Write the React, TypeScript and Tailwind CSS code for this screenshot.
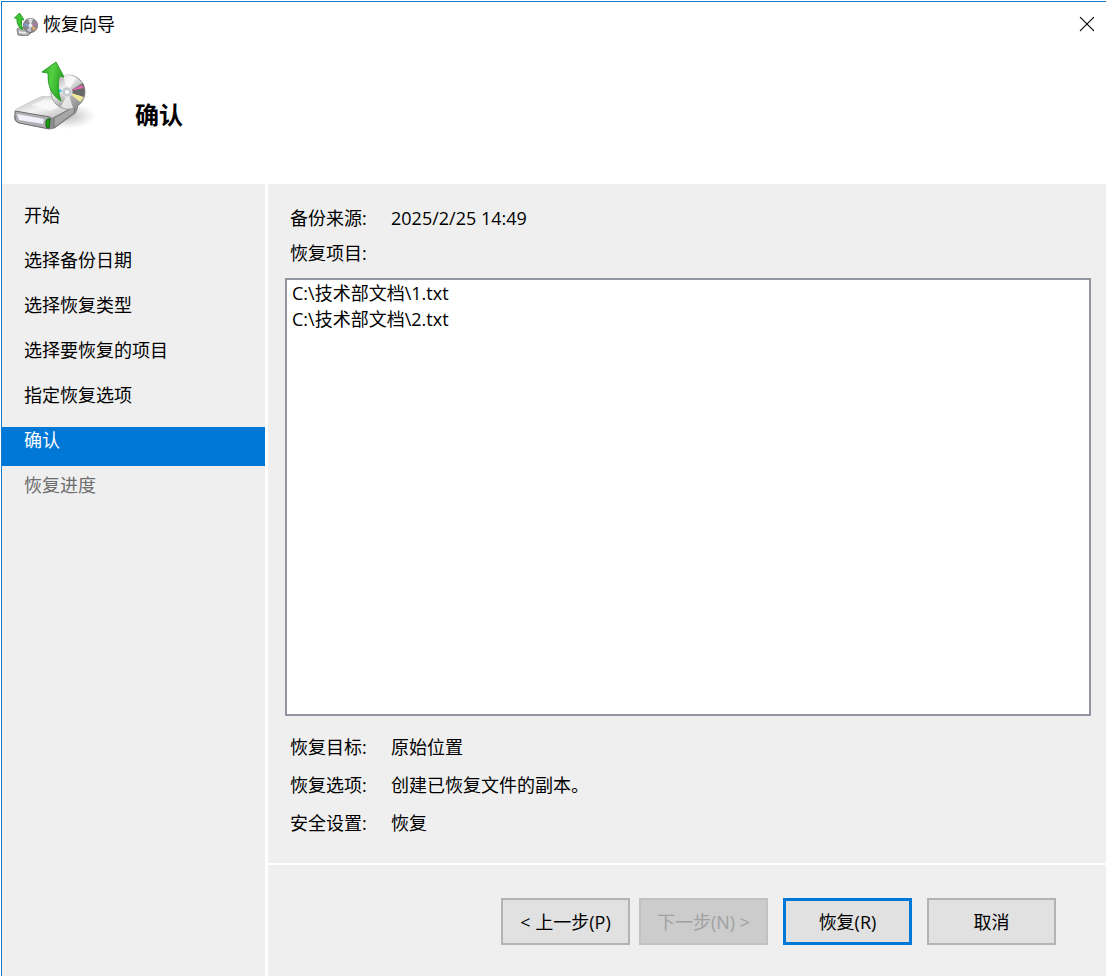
import { X } from 'lucide-react';
import { clsx } from 'clsx';

interface WizardStep {
  label: string;
  state: 'done' | 'current' | 'pending';
}

interface DetailRow {
  label: string;
  value: string;
}

const STEPS: WizardStep[] = [
  { label: '开始', state: 'done' },
  { label: '选择备份日期', state: 'done' },
  { label: '选择恢复类型', state: 'done' },
  { label: '选择要恢复的项目', state: 'done' },
  { label: '指定恢复选项', state: 'done' },
  { label: '确认', state: 'current' },
  { label: '恢复进度', state: 'pending' }
];

const DETAILS: DetailRow[] = [
  { label: '恢复目标:', value: '原始位置' },
  { label: '恢复选项:', value: '创建已恢复文件的副本。' },
  { label: '安全设置:', value: '恢复' }
];

const ITEMS = ['C:\\技术部文档\\1.txt', 'C:\\技术部文档\\2.txt'];

const BUTTON = 'h-[47px] w-[129px] border-2 border-[#b3b3b3] bg-[#e1e1e1]';

function RecoveryIcon({ className }: { className?: string }) {
  return (
    <svg viewBox="0 0 84 74" className={className} aria-hidden="true">
      <defs>
        <linearGradient id="arrow" x1="0" y1="0" x2="1" y2="0.3">
          <stop offset="0" stopColor="#2fa52a" />
          <stop offset="0.5" stopColor="#55d043" />
          <stop offset="1" stopColor="#27a322" />
        </linearGradient>
        <linearGradient id="driveTop" x1="0" y1="0" x2="1" y2="1">
          <stop offset="0" stopColor="#b8b8b8" />
          <stop offset="0.5" stopColor="#f3f3f3" />
          <stop offset="1" stopColor="#b0b0b0" />
        </linearGradient>
        <linearGradient id="disc" x1="0.1" y1="0" x2="0.9" y2="1">
          <stop offset="0" stopColor="#9a9a9a" />
          <stop offset="0.35" stopColor="#eeeeee" />
          <stop offset="0.6" stopColor="#b4b4b4" />
          <stop offset="1" stopColor="#858585" />
        </linearGradient>
        <radialGradient id="shadow">
          <stop offset="0" stopColor="#777" stopOpacity="0.5" />
          <stop offset="1" stopColor="#999" stopOpacity="0" />
        </radialGradient>
      </defs>
      <ellipse cx="55" cy="56" rx="28" ry="13" fill="url(#shadow)" />
      {/* drive */}
      <path d="M3 49 L27 37 Q30 36 34 36 L61 41 Q66 43 65 48 L63 53 L42 68 Q39 70 35 69 L6 63 Q2 62 1 58 Z" fill="#8c8c8c" />
      <path d="M3 49 L27 37 Q30 36 34 36 L61 41 Q66 43 62 46 L41 57 Q39 58 36 57 L6 53 Q1 52 3 49Z" fill="url(#driveTop)" />
      <path d="M18 45 L32 39 L54 43 L38 51Z" fill="#fff" opacity="0.6" />
      <path d="M2 51 L37 57 L36 69 L6 63 Q2 62 2 58Z" fill="#aeaeb2" stroke="#6e6e6e" strokeWidth="1" />
      <path d="M4 54 L31 59 L30 64 L6 60Z" fill="#f1f1fb" />
      <path d="M41 58 L62 46 L61 53 L41 68Z" fill="#a6a6a6" stroke="#757575" strokeWidth="1" />
      <path d="M33 61 Q34 58 37 59 L36 68 L33 67Z" fill="#18a50c" stroke="#176212" strokeWidth="1" />
      {/* disc */}
      <ellipse cx="55" cy="32" rx="17" ry="17" fill="url(#disc)" stroke="#989898" strokeWidth="1" />
      <path d="M55 32 L50 15 Q58 13 63 18Z" fill="#fff" opacity="0.7" />
      <path d="M55 32 L70 23 Q73 30 71 38Z" fill="#686868" />
      <path d="M56 31 L69 25 L71 28Z" fill="#e06ab0" />
      <path d="M55 32 L71 37 L67 42Z" fill="#eee89a" />
      <path d="M55 32 L48 47 Q54 50 60 48Z" fill="#fff" opacity="0.7" />
      <path d="M52 32 L43 27 L42 32Z" fill="#3ecde0" />
      <circle cx="54" cy="32" r="5" fill="#c6cacd" stroke="#e5e5e5" strokeWidth="1" />
      <circle cx="54" cy="32" r="2" fill="#fff" />
      {/* arrow */}
      <path
        d="M43 2 L29 12 L35 13 Q34 33 48 41 Q44 30 46 16 L51 17Z"
        fill="url(#arrow)"
        stroke="#2a9d25"
        strokeWidth="1"
        strokeLinejoin="round"
      />
    </svg>
  );
}

function TitleIcon() {
  return (
    <svg viewBox="0 0 24 24" className="size-6" aria-hidden="true">
      <path d="M3 17 L7 15 L16 18 L17 21 L13 24 L4 23Z" fill="#b5b5b8" stroke="#7b7b7b" strokeWidth="1" />
      <path d="M5 20 L12 21" stroke="#f0f0f5" strokeWidth="1.5" />
      <circle cx="16.5" cy="13.5" r="7" fill="#8b8b90" stroke="#707074" strokeWidth="1" />
      <path d="M16.5 13.5 L14 7 Q17 6 19 7Z" fill="#dedede" />
      <path d="M16.5 13.5 L22 10 L23 13Z" fill="#b877a4" />
      <path d="M16.5 13.5 L22 16 L20 19Z" fill="#e3a868" />
      <path d="M16.5 13.5 L13 19 L17 20Z" fill="#c9c9dd" />
      <path d="M16.5 13.5 L10.500 11 L10.500 14Z" fill="#7c9ed0" />
      <circle cx="16.5" cy="13.500" r="2" fill="#e8e8ee" />
      <path d="M5.500 1 L0.500 6 L3 6.500 Q2.500 14 8.500 18 Q7 13 7.500 7.500 L10 8Z" fill="#3cc433" stroke="#2a9b27" strokeWidth="1" strokeLinejoin="round" />
    </svg>
  );
}

function StepList() {
  return (
    <nav className="w-[263px] shrink-0 bg-[#efefef] pt-[18px]">
      <ol className="flex flex-col gap-[6px]">
        {STEPS.map((step) => (
          <li
            key={step.label}
            aria-current={step.state === 'current' ? 'step' : undefined}
            className={clsx('h-[39px] pl-[22px]', {
              'bg-[#0078d7] text-white': step.state === 'current',
              'text-[#6d6d6d]': step.state === 'pending'
            })}
          >
            {step.label}
          </li>
        ))}
      </ol>
    </nav>
  );
}

export default function App() {
  return (
    <div className="flex min-h-screen flex-col bg-white pt-px pl-px font-['Open_Sans','Noto_Sans_CJK_SC',sans-serif] text-[18px] leading-[26px] text-black">
      <div className="flex flex-1 flex-col border-t border-l border-[#1979ca]">
        <header className="h-[182px] shrink-0">
          <div className="flex h-[44px] items-center justify-between pr-[9px] pl-3">
            <div className="flex items-center gap-[5px]">
              <TitleIcon />
              <span>恢复向导</span>
            </div>
            <button type="button" aria-label="关闭">
              <X className="size-5" strokeWidth={1} viewBox="3 3 18 18" />
            </button>
          </div>
          <div className="flex items-center pt-[14px] pl-[11px]">
            <RecoveryIcon className="h-[74px] w-[84px]" />
            <h1 className="pt-9 pl-[38px] text-2xl font-bold">确认</h1>
          </div>
        </header>

        <div className="flex flex-1 gap-[3px]">
          <StepList />
          <main className="flex min-w-0 flex-1 flex-col bg-[#efefef]">
            <div className="flex flex-1 flex-col pt-[21px] pr-[15px] pb-[27px] pl-[17px]">
              <div className="flex px-[5px]">
                <span className="w-[101px]">备份来源:</span>
                <span>2025/2/25 14:49</span>
              </div>
              <label htmlFor="items" className="mt-[9px] px-[5px]">恢复项目:</label>
              <textarea
                id="items"
                readOnly
                value={ITEMS.join('\n')}
                className="mt-3 min-h-[120px] flex-1 resize-none border-2 border-[#9296a3] bg-white px-[5px] outline-none"
              />
              <dl className="mt-[18px] flex flex-col gap-3 px-[5px]">
                {DETAILS.map((row) => (
                  <div key={row.label} className="flex">
                    <dt className="w-[101px]">{row.label}</dt>
                    <dd>{row.value}</dd>
                  </div>
                ))}
              </dl>
            </div>
            <footer className="flex justify-end gap-[15px] border-t-2 border-white pt-[33px] pr-[50px] pb-[31px]">
              <div className="flex gap-[9px]">
                <button type="button" className={BUTTON}>&lt; 上一步(P)</button>
                <button type="button" disabled className="h-[47px] w-[129px] border-2 border-[#c2c2c2] bg-[#cccccc] text-[#a0a0a0]">
                  下一步(N) &gt;
                </button>
              </div>
              <button type="button" className="h-[47px] w-[129px] border-3 border-[#0078d7] bg-[#e1e1e1]">恢复(R)</button>
              <button type="button" className={BUTTON}>取消</button>
            </footer>
          </main>
        </div>
      </div>
    </div>
  );
}
